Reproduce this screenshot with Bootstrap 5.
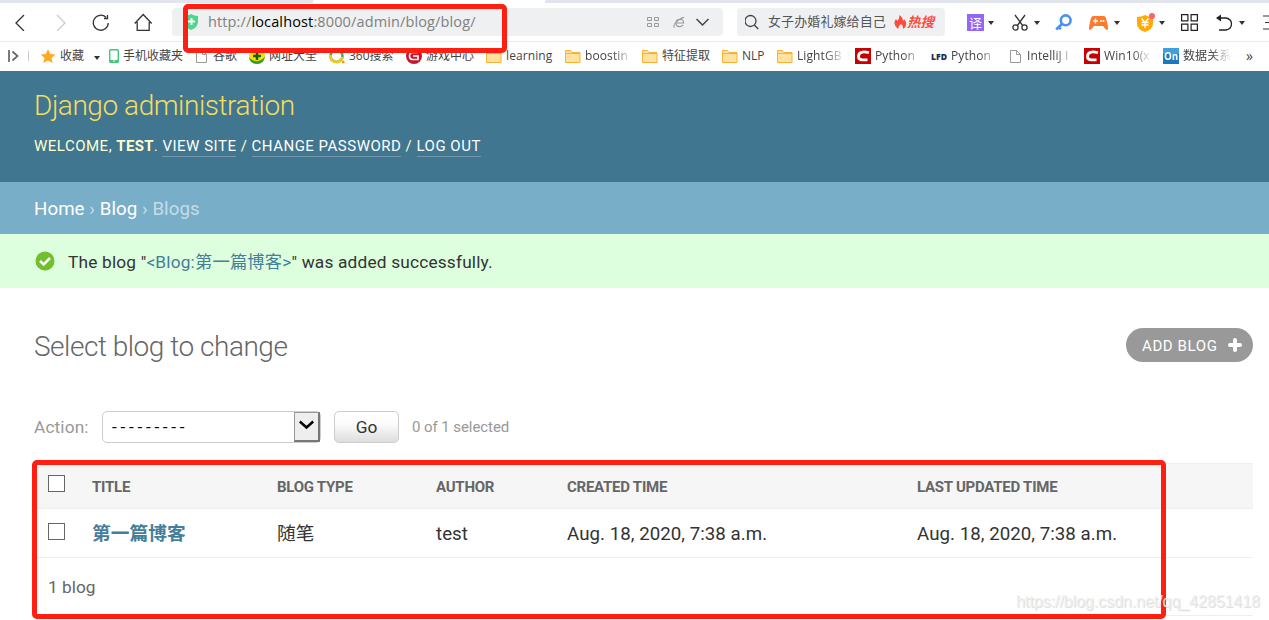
<!DOCTYPE html>
<html lang="en">
<head>
<meta charset="utf-8">
<title>Select blog to change | Django site admin</title>
<link rel="stylesheet" href="https://cdn.jsdelivr.net/npm/bootstrap@5.3.0/dist/css/bootstrap.min.css">
<script src="https://cdn.jsdelivr.net/npm/bootstrap@5.3.0/dist/js/bootstrap.bundle.min.js"></script>
<style>
  body { width: 1269px; height: 620px; overflow: hidden; color: #333; font-family: Roboto, "Noto Sans CJK SC", sans-serif; }
  svg { display: block; flex: none; }
  a { text-decoration: none; }
  /* browser chrome */
  .chrome { font-family: "Open Sans", "Noto Sans CJK SC", sans-serif; }
  .tabstrip { height: 3px; background: linear-gradient(90deg, #e2e6ec 313px, #fff 313px 545px, #e2e6ec 545px); }
  .toolbar { height: 39px; border-bottom: 1px solid #e9eaec; display: grid; align-items: center; padding-left: 14px;
    grid-template-columns: 40px 38px 42px 38px 551px 14px 208px 22px 45px 43px 34px 47px 45px 35px 47px 6px; }
  .tool { display: flex; align-items: center; gap: 6px; padding-top: 1px; }
  .tool.near { gap: 4px; }
  .field { height: 28px; background: #eff0f2; border-radius: 4px; white-space: nowrap; }
  .shield { margin-left: 10px; }
  .url { font-size: 14.5px; color: #808080; letter-spacing: .13px; margin-left: 8px; }
  .url b { font-weight: 400; color: #000; }
  .ie { margin: 0 11px 0 14px; }
  .open { margin-right: 14px; }
  .query { font-size: 13px; color: #555; letter-spacing: .1px; }
  .hot { font-size: 13.5px; color: #ff4b3e; font-weight: 700; font-style: italic; }
  .caret { width: 0; border: 3px solid transparent; border-top: 4px solid #333; border-bottom: 0; }
  .bookmarks { height: 29px; padding: 0 0 2px 8px; display: grid; align-items: center; font-size: 12px; line-height: 18px; color: #444;
    grid-template-columns: 20px 12px 54px 9px 90px 56px 80px 77px 80px 79px 77px 80px 55px 78px 76px 76px 77px 79px 83px 20px; }
  .bm { display: flex; align-items: center; gap: 4px; white-space: nowrap; }
  .bm svg { margin-top: 1px; }
  .bm span { letter-spacing: .1px; }
  .more { font-size: 14px; }
  .fade-out { -webkit-mask-image: linear-gradient(90deg, #000 28px, rgba(0,0,0,.15) 45px); mask-image: linear-gradient(90deg, #000 28px, rgba(0,0,0,.15) 45px); }
  /* admin */
  .masthead { height: 111px; background: #417690; color: #ffc; padding: 18px 34px 0; }
  .site { font-size: 28px; font-weight: 300; line-height: 34px; color: #f5dd5d; letter-spacing: -.45px; }
  .tools { font-size: 15px; line-height: 20px; margin-top: 13px; letter-spacing: .5px; text-transform: uppercase; }
  .tools strong { letter-spacing: .3px; }
  .tools a { color: #fff; border-bottom: 1px solid #7499ac; padding-bottom: 1px; }
  .crumbs { height: 52px; background: #79aec8; color: #c4dce8; padding: 2px 34px 0; font-size: 18.7px; letter-spacing: .07px; }
  .crumbs a { color: #fff; }
  .notice { height: 54px; background: #dfd; padding: 0 35px; gap: 13px; font-size: 17.3px; letter-spacing: .18px; color: #333; }
  .notice div { padding-top: 3px; }
  .notice a, .main th a { color: #447e9b; }
  .main { padding: 40px 16px 0 34px; }
  .main h1 { font-size: 28px; font-weight: 300; line-height: 38px; color: #666; margin: 0; letter-spacing: -.48px; }
  .add { width: 127px; height: 34px; border-radius: 17px; background: #999; color: #fff; font-size: 15px; letter-spacing: .6px; padding: 0 11px 0 16px; }
  .add span { padding-top: 2px; }
  .acts { margin-top: 45px; height: 32px; font-size: 17.3px; color: #999; }
  .acts > span { padding-top: 1px; }
  .label-text { width: 55px; letter-spacing: .12px; }
  .pick { width: 219px; height: 32px; border: 1px solid #ccc; border-radius: 5px; color: #000; margin-left: 13px; padding-left: 9px; background: #fff; }
  .dashes { letter-spacing: 3.7px; padding-top: 2px; }
  .drop { width: 26px; height: 30px; background: #eee; border: 1px solid #999; border-right: 2px solid #777; border-bottom: 2px solid #777; padding-bottom: 3px; }
  .go { width: 65px; height: 32px; border: 1px solid #ccc; border-radius: 5px; color: #333; margin-left: 13px; padding-top: 1px; background: linear-gradient(#fff, #fcfcfc 40%, #ddd); }
  .count { font-size: 15px; margin-left: 13px; letter-spacing: -.07px; }
  .grid { width: 1219px; margin-top: 20px; table-layout: fixed; border-collapse: collapse; }
  .grid thead tr { height: 45px; background: #f6f6f6; border-top: 1px solid #eee; border-bottom: 1px solid #eee; }
  .grid thead th { font-size: 15px; font-weight: 700; color: #666; text-transform: uppercase; letter-spacing: -.25px; padding: 2px 0 0; }
  .grid tbody tr { height: 49px; border-bottom: 1px solid #eee; font-size: 18.7px; letter-spacing: .04px; }
  .grid tbody td, .grid tbody th { padding: 2px 0 0; }
  .tick { width: 17px; height: 17px; border: 1px solid #666; background: #fff; margin: -6px 0 0 14px; }
  .grid thead .tick { margin-top: -8px; }
  .total { height: 58px; border-bottom: 1px solid #eee; font-size: 17.3px; color: #666; padding: 2px 0 0 14px; }
  /* annotations lying over the page */
  .frame { position: absolute; border: 5px solid #ff1f12; border-radius: 5px; }
  .f1 { left: 183px; top: 4px; width: 324px; height: 49px; }
  .f2 { left: 32px; top: 460px; width: 1134px; height: 159px; }
  .stamp { position: absolute; left: 1016px; top: 592px; font: 16px/20px "Liberation Sans", sans-serif; letter-spacing: -.05px; color: rgba(240,240,240,.9); text-shadow: 1px 1px 1px rgba(120,120,120,.28); white-space: nowrap; }
</style>
</head>
<body class="position-relative bg-white">
<svg width="0" height="0" class="position-absolute">
  <symbol id="folder" viewBox="0 0 16 16"><path d="M.5 14.500V2.500h5l1.500 2h8v10z" fill="#ffe2a0" stroke="#f9b233"/><path d="M.5 5.500h14.500" stroke="#f9b233"/></symbol>
  <symbol id="page" viewBox="0 0 16 16"><path d="M3.500 2.500h6l4 4v8h-10z M9.500 2.500v4h4" fill="#fff" stroke="#999"/></symbol>
  <symbol id="cee" viewBox="0 0 16 16"><path d="M0 0h16v16H0z" fill="#c80000"/><path d="M14 4.700Q9 3.500 6.500 4.300 3.500 5.300 3.500 8.500q0 3.300 4 3.300h5" fill="none" stroke="#fff" stroke-width="2.800"/></symbol>
</svg>
<header class="chrome">
  <div class="tabstrip"></div>
  <div class="toolbar">
    <svg width="12" height="18" viewBox="0 0 12 18" fill="none" stroke="#333" stroke-width="1.300"><path d="M10 2 2 10l8 8"/></svg>
    <svg width="14" height="18" viewBox="0 0 14 18" fill="none" stroke="#ccc" stroke-width="1.300"><path d="M3 2l8 8-8 8"/></svg>
    <svg width="18" height="18" viewBox="0 0 18 18" fill="none" stroke="#333" stroke-width="1.300"><path d="M16.300 10A7.500 7.500 0 1 1 14 4.300M15.500 2v3.500H12"/></svg>
    <svg width="19" height="18" viewBox="0 0 19 18" fill="none" stroke="#333" stroke-width="1.300"><path d="M.7 10.500 9.200 1.500 17.700 10.500M3.200 9v8.300h12V9"/></svg>
    <div class="field d-flex align-items-center">
      <svg class="shield" width="18" height="18" viewBox="0 0 18 18"><path d="M2 3q4 0 7-2 3 2 7 2v6q0 5-7 8-7-3-7-8z" fill="#49d98a"/><path d="M9.500 5v7M6 8.500h7" stroke="#fff" stroke-width="2"/></svg>
      <span class="url me-auto">http://<b>localhost</b>:8000/admin/blog/blog/</span>
      <svg width="12" height="12" viewBox="0 0 12 12" fill="none" stroke="#999"><path d="M.5 1.500h4v3h-4zM7.500 1.500h4v3h-4zM.5 7.500h4v3h-4zM7.500 7.500h4v3h-4z"/></svg>
      <svg class="ie" width="12" height="13" viewBox="-.5 0 13 13" fill="none" stroke="#999" stroke-width="1.200"><path d="M3 7h8Q11 3 7 3 2.500 3 2.500 7.500 3 11 6.500 11 9 11 10.500 9M1 12Q-1 9 4 5T11.500 1"/></svg>
      <svg class="open" width="13" height="8" viewBox="0 0 13 8" fill="none" stroke="#444" stroke-width="1.500"><path d="M.5 1l6 6 6-6"/></svg>
    </div>
    <span></span>
    <div class="field d-flex align-items-center">
      <svg class="ms-2" width="15" height="16" viewBox="2 0 15 16" fill="none" stroke="#444" stroke-width="1.300"><circle cx="7.500" cy="7" r="5.500"/><path d="M11.300 11l4 4"/></svg>
      <span class="query ms-2">女子办婚礼嫁给自己</span>
      <svg class="ms-2" width="13" height="14" viewBox="0 0 13 14"><path d="M4 14Q-2 9 2 4q1 1 1 2 3-2 2-6 4 2 4 6 1-1 1-2 5 6-1 10 0-4-2-5-3 2-3 5z" fill="#ff4b3e"/></svg>
      <span class="hot">热搜</span>
    </div>
    <span></span>
    <div class="tool near"><svg width="17" height="17" viewBox="0 0 17 17"><path d="M0 0h17v17H0z" fill="#9366fa"/><text x="2" y="13.500" font-size="13" fill="#fff">译</text></svg><i class="caret"></i></div>
    <div class="tool"><svg width="16" height="17" viewBox="0 0 16 17" fill="none" stroke="#333" stroke-width="1.300"><path d="M3 1l8 11M13 1L5 12"/><circle cx="3.500" cy="13.500" r="2.600"/><circle cx="12.500" cy="13.500" r="2.600"/></svg><i class="caret"></i></div>
    <svg width="17" height="17" viewBox="0 0 17 17" fill="none" stroke="#4a90f7" stroke-width="2.600"><circle cx="10.700" cy="6.300" r="4.900"/><path d="M7.500 9.500L1.200 15.500M3 13l3 2"/></svg>
    <div class="tool"><svg width="19" height="16" viewBox="0 0 19 16"><path d="M4 1h11q2 0 3 6 2 8 0 8-1 0-4-4H5Q2 15 1 15q-2 0 0-8 1-6 3-6z" fill="#ff7b2c"/><path d="M6.500 3.500v5M4 6h5" stroke="#fff" stroke-width="1.300"/><circle cx="12" cy="6" r="1" fill="#fff"/><circle cx="14.500" cy="6" r="1" fill="#fff"/></svg><i class="caret"></i></div>
    <div class="tool near"><svg width="19" height="20" viewBox="0 0 19 20"><path d="M1 4q4 0 8-2 3 2 8 2v7q0 5-8 8-8-3-8-8z" fill="#ffaa08"/><path d="M5.500 5.500L9 9.500l3.500-4M9 9.500V15M5.500 9.500h7M5.500 12h7" fill="none" stroke="#fff" stroke-width="1.300"/><circle cx="16" cy="3" r="3" fill="#ff6269"/></svg><i class="caret"></i></div>
    <div class="tool"><svg width="17" height="17" viewBox="0 0 17 17" fill="none" stroke="#222" stroke-width="1.200"><path d="M.6.600h6.300v6.300H.600zM10.100.6h6.300v6.300h-6.300zM.6 10.100h6.300v6.300H.600zM10.100 10.100h6.300v6.300h-6.300z"/></svg></div>
    <div class="tool"><svg width="17" height="17" viewBox="0 0 17 17" fill="none" stroke="#222" stroke-width="1.300"><path d="M1 4h9q5.500 1 5.500 6t-5.500 6H3"/><path d="M0 4l5-3.500v7z" fill="#222" stroke="none"/></svg><i class="caret"></i></div>
    <div class="tool"><svg width="6" height="15" viewBox="0 0 6 15" stroke="#333" stroke-width="1.200"><path d="M0 1h6M2 7.500h4M0 14h6"/></svg></div>
  </div>
  <nav class="bookmarks">
    <svg width="12" height="12" viewBox="0 0 12 12" fill="none" stroke="#666" stroke-width="1.700"><path d="M1 0v12M4.500 1.500L9.500 6l-5 4.500"/></svg>
    <svg width="1" height="10"><path d="M0 0h1v10H0z" fill="#ccc"/></svg>
    <div class="bm"><svg width="16" height="16" viewBox="0 0 16 16"><path d="M8 1l2.200 4.900 5.100.5-3.800 3.500 1.100 5.100L8 12.400 3.400 15l1.100-5.100L.7 6.400l5.100-.5z" fill="#ffa81e"/></svg>收藏</div>
    <i class="caret mt-1"></i>
    <div class="bm"><svg width="16" height="16" viewBox="0 0 16 16"><rect x="6.700" y="1.700" width="8.600" height="12.600" rx="1" fill="#fff" stroke="#3ec878" stroke-width="1.400"/><path d="M6.500 12h9v2.500h-9z" fill="#3ec878"/><path d="M10 13h2" stroke="#fff"/></svg>手机收藏夹</div>
    <div class="bm"><svg width="16" height="16"><use href="#page"/></svg>谷歌</div>
    <div class="bm"><svg width="16" height="16" viewBox="0 0 16 16"><circle cx="8" cy="8" r="8" fill="#ffe000"/><path d="M0 9q4 5 9 4 5-1 7-5Q15 16 8 16 1 16 0 9z" fill="#2f9e2e"/><path d="M8 4v8M4 8h8" stroke="#14611c" stroke-width="2.500"/></svg>网址大全</div>
    <div class="bm"><svg width="16" height="16" viewBox="0 0 16 16" fill="none" stroke-width="2.600"><circle cx="7.500" cy="8" r="6" stroke="#2db56a"/><path d="M1.500 7v2q1 5 6 5 5 0 6-5" stroke="#ffc715"/><path d="M13 14h2.500" stroke="#f90"/></svg>360搜索</div>
    <div class="bm"><svg width="16" height="16" viewBox="0 0 16 16"><circle cx="8" cy="8" r="8" fill="#c5162b"/><path d="M12 4.500H6Q3.500 5 3.500 8T6 11.500h6V8H7" fill="none" stroke="#fff" stroke-width="1.600"/></svg>游戏中心</div>
    <div class="bm"><svg width="16" height="16"><use href="#folder"/></svg><span>learning</span></div>
    <div class="bm"><svg width="16" height="16"><use href="#folder"/></svg><span class="fade-out">boostin</span></div>
    <div class="bm"><svg width="16" height="16"><use href="#folder"/></svg>特征提取</div>
    <div class="bm"><svg width="16" height="16"><use href="#folder"/></svg>NLP</div>
    <div class="bm"><svg width="16" height="16"><use href="#folder"/></svg><span class="fade-out">LightGB</span></div>
    <div class="bm"><svg width="16" height="16"><use href="#cee"/></svg><span class="fade-out">Python</span></div>
    <div class="bm"><svg width="16" height="16" viewBox="0 0 16 16"><text x="0" y="11.500" font-size="8" font-weight="800" fill="#1c2850" textLength="16" lengthAdjust="spacingAndGlyphs">LFD</text></svg><span class="fade-out">Python</span></div>
    <div class="bm"><svg width="16" height="16"><use href="#page"/></svg><span class="fade-out">IntelliJ I</span></div>
    <div class="bm"><svg width="16" height="16"><use href="#cee"/></svg><span class="fade-out">Win10(x</span></div>
    <div class="bm"><svg width="16" height="16" viewBox="0 0 16 16"><path d="M0 0h16v16H0z" fill="#1a78c2"/><path d="M0 0h16v6H0z" fill="#3fa0dc"/><text x="1" y="12" font-size="10.500" font-weight="700" fill="#fff" textLength="14" lengthAdjust="spacingAndGlyphs">On</text></svg><span class="fade-out">数据关系</span></div>
    <span class="more">»</span>
  </nav>
</header>

<div class="masthead">
  <div class="site"><span>Django administration</span></div>
  <div class="tools">Welcome, <strong>test</strong>. <a href="#">View site</a> / <a href="#">Change password</a> / <a href="#">Log out</a></div>
</div>
<nav class="crumbs d-flex align-items-center"><div><a href="#">Home</a> › <a href="#">Blog</a> › Blogs</div></nav>
<div class="notice d-flex align-items-center">
  <svg width="20" height="20" viewBox="0 0 20 20"><circle cx="10" cy="10" r="9.500" fill="#70bf2b"/><path d="M5 9.800l3.700 3.700L15 7" fill="none" stroke="#fff" stroke-width="2.600"/></svg>
  <div>The blog "<a href="#">&lt;Blog:第一篇博客&gt;</a>" was added successfully.</div>
</div>
<main class="main">
  <div class="d-flex justify-content-between align-items-start">
    <h1>Select blog to change</h1>
    <a href="#" class="add d-flex align-items-center justify-content-between"><span>ADD BLOG</span><svg width="14" height="14" viewBox="0 0 14 14" stroke="#fff" stroke-width="4" stroke-linecap="round"><path d="M7 2v10M2 7h10"/></svg></a>
  </div>
  <div class="acts d-flex align-items-center">
    <span class="label-text">Action:</span>
    <div class="pick d-flex align-items-center justify-content-between"><span class="dashes">---------</span><span class="drop d-flex align-items-center justify-content-center"><svg width="15" height="10" viewBox="0 0 15 10" fill="none" stroke="#000" stroke-width="2.500"><path d="M.8 1.500l6.700 6 6.700-6"/></svg></span></div>
    <div class="go d-flex align-items-center justify-content-center">Go</div>
    <span class="count">0 of 1 selected</span>
  </div>
  <table class="grid">
    <colgroup><col width="58"><col width="185"><col width="159"><col width="131"><col width="350"><col></colgroup>
    <thead><tr><th><div class="tick"></div></th><th>Title</th><th>Blog type</th><th>Author</th><th>Created time</th><th>Last updated time</th></tr></thead>
    <tbody><tr><td><div class="tick"></div></td><th><a href="#">第一篇博客</a></th><td>随笔</td><td>test</td><td>Aug. 18, 2020, 7:38 a.m.</td><td>Aug. 18, 2020, 7:38 a.m.</td></tr></tbody>
  </table>
  <div class="total d-flex align-items-center">1 blog</div>
</main>
<div class="frame f1"></div>
<div class="frame f2"></div>
<div class="stamp">https://blog.csdn.net/qq_42851418</div>
</body>
</html>
